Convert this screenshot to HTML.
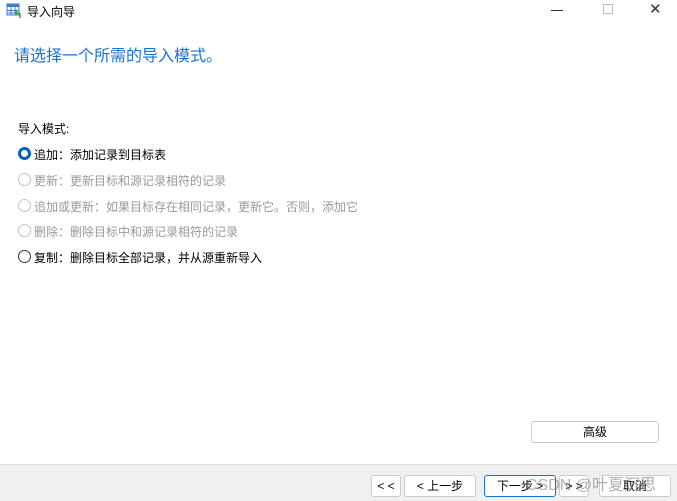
<!DOCTYPE html>
<html><head><meta charset="utf-8"><style>
body{margin:0;width:677px;height:500px;background:#fff;font-family:"Liberation Sans","Noto Sans CJK SC",sans-serif;position:relative;overflow:hidden;font-size:12px;color:#000}
.a{position:absolute;white-space:nowrap}
.r{position:absolute;left:18px;width:13px;height:13px;border:1px solid #c4c4c4;border-radius:50%;box-sizing:border-box}
.btn{position:absolute;height:22px;border:1px solid #ccc;border-radius:3px;background:#fff;box-sizing:border-box;text-align:center;line-height:20px;font-size:12px}
.g{color:#999}
</style></head><body>
<svg class="a" style="left:6px;top:3px" width="16" height="16" viewBox="0 0 16 16"><rect x="1" y="1" width="12" height="11" fill="#fff" stroke="#3a7bd5"/><rect x="1" y="1" width="12" height="3" fill="#3a7bd5"/><path d="M1 7.5h12M1 10h8M5 4v8M9 4v5" stroke="#3a7bd5"/><path d="M14 15v-3a2 2 0 0 0-2-2h-3M11 8l-2 2 2 2" stroke="#2a9d3a" stroke-width="1.5" fill="none"/></svg>
<div class="a" style="left:27px;top:3px;font-size:12px">导入向导</div>
<div class="a" style="left:551px;top:10px;width:12px;height:1px;background:#333"></div>
<div class="a" style="left:603px;top:4px;width:8px;height:8px;border:1px solid #bbb"></div>
<div class="a" style="left:649px;top:0px;font-size:15px;color:#333;font-weight:300">✕</div>
<div class="a" style="left:14px;top:42px;font-size:16px;color:#1a73d0">请选择一个所需的导入模式。</div>
<div class="a" style="left:18px;top:120px">导入模式:</div>
<div class="r" style="top:147px;border:3.5px solid #0a5fb8"></div><div class="a" style="left:34px;top:146px">追加：添加记录到目标表</div>
<div class="r" style="top:173px"></div><div class="a g" style="left:34px;top:172px">更新：更新目标和源记录相符的记录</div>
<div class="r" style="top:199px"></div><div class="a g" style="left:34px;top:198px">追加或更新：如果目标存在相同记录，更新它。否则，添加它</div>
<div class="r" style="top:224px"></div><div class="a g" style="left:34px;top:223px">删除：删除目标中和源记录相符的记录</div>
<div class="r" style="top:250px;border-color:#333"></div><div class="a" style="left:34px;top:249px">复制：删除目标全部记录，并从源重新导入</div>
<div class="btn" style="left:531px;top:421px;width:128px">高级</div>
<div class="a" style="left:0;top:464px;width:677px;height:36px;background:#f0f0f0;border-top:1px solid #ddd"></div>
<div class="btn" style="left:371px;top:475px;width:30px">&lt; &lt;</div>
<div class="btn" style="left:404px;top:475px;width:72px">&lt; 上一步</div>
<div class="btn" style="left:484px;top:475px;width:72px;border-color:#1a73d0">下一步 &gt;</div>
<div class="btn" style="left:559px;top:475px;width:30px">&gt; &gt;</div>
<div class="btn" style="left:599px;top:475px;width:72px">取消</div>
<div class="a" style="left:526px;top:471px;font-size:16px;color:rgba(120,120,120,.6)">CSDN @叶夏沉思</div>
</body></html>
